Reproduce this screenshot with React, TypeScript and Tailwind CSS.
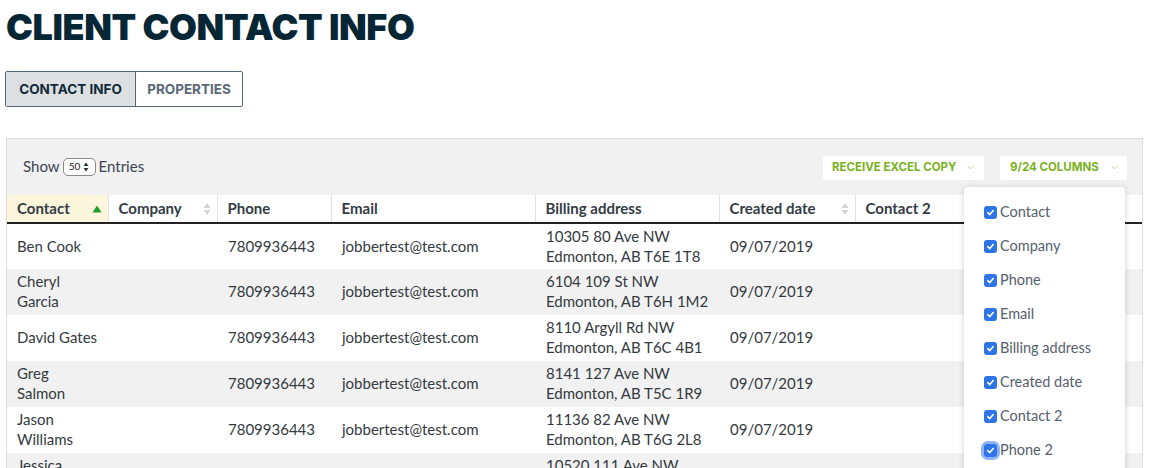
import { ChevronDown } from "lucide-react";

const rows = [
  { name: ["Ben Cook"], addr: ["10305 80 Ave NW", "Edmonton, AB T6E 1T8"] },
  { name: ["Cheryl", "Garcia"], addr: ["6104 109 St NW", "Edmonton, AB T6H 1M2"] },
  { name: ["David Gates"], addr: ["8110 Argyll Rd NW", "Edmonton, AB T6C 4B1"] },
  { name: ["Greg", "Salmon"], addr: ["8141 127 Ave NW", "Edmonton, AB T5C 1R9"] },
  { name: ["Jason", "Williams"], addr: ["11136 82 Ave NW", "Edmonton, AB T6G 2L8"] },
  { name: ["Jessica", "Smith"], addr: ["10520 111 Ave NW", "Edmonton, AB T5H 0B4"] },
];

const columns = [
  "Contact",
  "Company",
  "Phone",
  "Email",
  "Billing address",
  "Created date",
  "Contact 2",
  "Phone 2",
];

function SortBoth() {
  return (
    <svg width="8" height="14" viewBox="0 0 8 14" className="shrink-0">
      <path d="M4 1 L7.5 6 L0.5 6 Z" fill="#d4d4d4" />
      <path d="M4 13 L7.5 8 L0.5 8 Z" fill="#d4d4d4" />
    </svg>
  );
}

function SortUp() {
  return (
    <svg width="10" height="8" viewBox="0 0 10 8" className="shrink-0">
      <path d="M5 0.5 L9.5 7.5 L0.5 7.5 Z" fill="#1e9e2a" />
    </svg>
  );
}

function Check() {
  return (
    <span className="w-[13px] h-[13px] rounded-[3px] bg-[#2f74e6] flex items-center justify-center shrink-0">
      <svg width="9" height="9" viewBox="0 0 10 10">
        <path d="M2 5.2 L4.2 7.3 L8 2.8" stroke="#fff" strokeWidth="1.8" fill="none" strokeLinecap="round" strokeLinejoin="round" />
      </svg>
    </span>
  );
}

export default function App() {
  return (
    <div className="w-[1149px] h-[468px] overflow-hidden bg-white px-[6px] font-['Lato',sans-serif]">
      <h1 className="pt-[7px] text-[36px] leading-[40px] font-black uppercase tracking-[-0.4px] text-[#042635] font-['Inter',sans-serif]">
        Client Contact Info
      </h1>

      {/* tabs */}
      <div className="mt-[24px] -ml-[1px] flex w-max border border-[#55657a] rounded-[2px] h-[36px] font-['Inter',sans-serif] text-[13.5px] font-bold uppercase">
        <div className="bg-[#dedfe1] text-[#0f2938] w-[130px] justify-center flex items-center border-r border-[#55657a]">
          Contact Info
        </div>
        <div className="text-[#5b6878] w-[106px] justify-center flex items-center">Properties</div>
      </div>

      {/* panel */}
      <div className="mt-[31px] border border-[#dcdcdc] bg-[#f1f1f1] relative">
        <div className="h-[56px] flex items-center justify-between pl-[16px] pr-[15px]">
          <div className="flex items-center gap-[3px] text-[15px] text-[#3a4450] -mt-[1px]">
            <span>Show</span>
            <span className="h-[18px] w-[33px] border border-[#8a8a8a] rounded-[5px] bg-white flex items-center justify-center gap-[3px] text-[10px] text-[#222]">
              50
              <svg width="6" height="10" viewBox="0 0 6 10">
                <path d="M3 0.5 L5.5 4 L0.5 4 Z" fill="#333" />
                <path d="M3 9.5 L5.5 6 L0.5 6 Z" fill="#333" />
              </svg>
            </span>
            <span>Entries</span>
          </div>
          <div className="flex items-center gap-[16px] font-['Inter',sans-serif] text-[11.5px] font-bold uppercase text-[#78b21e] mt-[1px]">
            <div className="h-[24px] w-[161px] bg-white rounded-[2px] pl-[9px] flex items-center gap-[9px]">
              Receive Excel Copy
              <ChevronDown size={11} className="text-[#b7d88a]" />
            </div>
            <div className="h-[24px] w-[127px] bg-white rounded-[2px] pl-[10px] flex items-center gap-[10px]">
              9/24 Columns
              <ChevronDown size={11} className="text-[#b7d88a]" />
            </div>
          </div>
        </div>

        <table className="w-full table-fixed border-collapse bg-white text-[15px] text-[#343a40]">
          <colgroup>
            <col className="w-[101px]" />
            <col className="w-[109px]" />
            <col className="w-[114px]" />
            <col className="w-[204px]" />
            <col className="w-[184px]" />
            <col className="w-[136px]" />
            <col className="w-[145px]" />
            <col />
          </colgroup>
          <thead>
            <tr className="h-[28px] border-b-2 border-[#222]">
              {columns.map((c, i) => (
                <th
                  key={c}
                  className={`text-left font-bold text-[#343b44] pl-[10px] pr-[6px] ${
                    i > 0 ? "border-l border-[#e2e2e2]" : ""
                  } ${i === 0 ? "bg-[#fbf6dc]" : ""}`}
                >
                  <div className="flex items-center justify-between">
                    <span className="whitespace-nowrap">{c}</span>
                    {i === 0 && <SortUp />}
                    {(i === 1 || i === 5) && <SortBoth />}
                  </div>
                </th>
              ))}
            </tr>
          </thead>
          <tbody>
            {rows.map((r, i) => (
              <tr key={i} className={`h-[46px] leading-[20px] ${i % 2 === 1 ? "bg-[#f1f1f1]" : "bg-white"}`}>
                <td className="pl-[10px] pb-[2px]">
                  {r.name.map((n) => (
                    <div key={n}>{n}</div>
                  ))}
                </td>
                <td />
                <td className="pl-[11px] pb-[2px]">7809936443</td>
                <td className="pl-[11px] pb-[2px]">jobbertest@test.com</td>
                <td className="pl-[11px] pb-[2px]">
                  {r.addr.map((a) => (
                    <div key={a} className="whitespace-nowrap">{a}</div>
                  ))}
                </td>
                <td className="pl-[11px] pb-[2px]">09/07/2019</td>
                <td />
                <td />
              </tr>
            ))}
          </tbody>
        </table>

        {/* columns dropdown */}
        <div className="absolute left-[957px] top-[48px] w-[161px] h-[300px] bg-white rounded-[4px] shadow-[0_1px_6px_rgba(0,0,0,0.18)] pt-[8px] pl-[20px]">
          {columns.map((c, i) => (
            <div key={c} className="h-[34px] flex items-center gap-[3px] text-[14.5px] text-[#56606c]">
              <span className={i === 7 ? "rounded-[4px] ring-[3px] ring-[#8fb4f2]" : ""}>
                <Check />
              </span>
              <span>{c}</span>
            </div>
          ))}
        </div>
      </div>
    </div>
  );
}
